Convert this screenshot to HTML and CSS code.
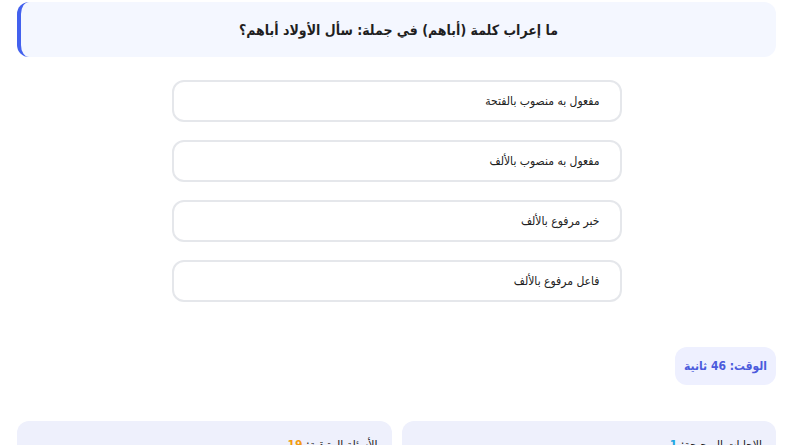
FILE: index.html
```html
<!DOCTYPE html>
<html lang="ar" dir="rtl">
<head>
  <meta charset="UTF-8">
  <meta name="viewport" content="width=device-width, initial-scale=1.0">
  <title>اختبار الإعراب</title>
  <link rel="stylesheet" href="styles.css">
</head>
<body>
  <div class="quiz">
    <!-- السؤال -->
    <div class="question">ما إعراب كلمة (أباهم) في جملة: سأل الأولاد أباهم؟</div>

    <!-- الخيارات -->
    <div class="options">
      <button class="option">مفعول به منصوب بالفتحة</button>
      <button class="option">مفعول به منصوب بالألف</button>
      <button class="option">خبر مرفوع بالألف</button>
      <button class="option">فاعل مرفوع بالألف</button>
    </div>

    <!-- المؤقت -->
    <div class="timer-row">
      <div class="timer">الوقت: <span class="num">46</span> ثانية</div>
    </div>

    <!-- الإحصائيات -->
    <div class="stats">
      <div class="stat">الإجابات الصحيحة: <span class="num correct">1</span></div>
      <div class="stat">الأسئلة المتبقية: <span class="num left">19</span></div>
    </div>
  </div>
</body>
</html>
```

FILE: styles.css
```css
body {
  margin: 0;
  padding: 2px 12px 0 17px;
  font-family: "DejaVu Sans Condensed", "DejaVu Sans", sans-serif;
  background: #fff;
  color: #222;
}
.quiz {
  display: flex;
  flex-direction: column;
}
.question {
  height: 55px;
  display: flex;
  align-items: center;
  justify-content: center;
  background-color: #f4f7ff;
  border-left: 4px solid #4361ee;
  border-radius: 12px;
  font-size: 14px;
  font-weight: bold;
  color: #1f1f1f;
}
.options {
  width: 450px;
  margin: 23px auto 0;
  display: flex;
  flex-direction: column;
  gap: 18px;
}
.option {
  height: 42px;
  border: 2px solid #e5e7eb;
  border-radius: 12px;
  background: #fff;
  text-align: right;
  padding: 0 20px;
  font-family: inherit;
  font-size: 12px;
  color: #222;
  cursor: pointer;
}
.timer-row {
  display: flex;
  margin-top: 45px;
}
.timer {
  background-color: #eef0ff;
  color: #4b5bdc;
  font-weight: bold;
  font-size: 12px;
  padding: 12px 9px;
  border-radius: 12px;
}
.stats {
  display: grid;
  grid-template-columns: 1fr 1fr;
  gap: 10px;
  margin-top: 36px;
}
.stat {
  background-color: #eef0fc;
  border-radius: 12px;
  padding: 17px 14px 10px;
  font-size: 12px;
  height: 40px;
}
.num { font-weight: bold; }
.correct { color: #1fa6e0; }
.left { color: #f39c12; }
```
